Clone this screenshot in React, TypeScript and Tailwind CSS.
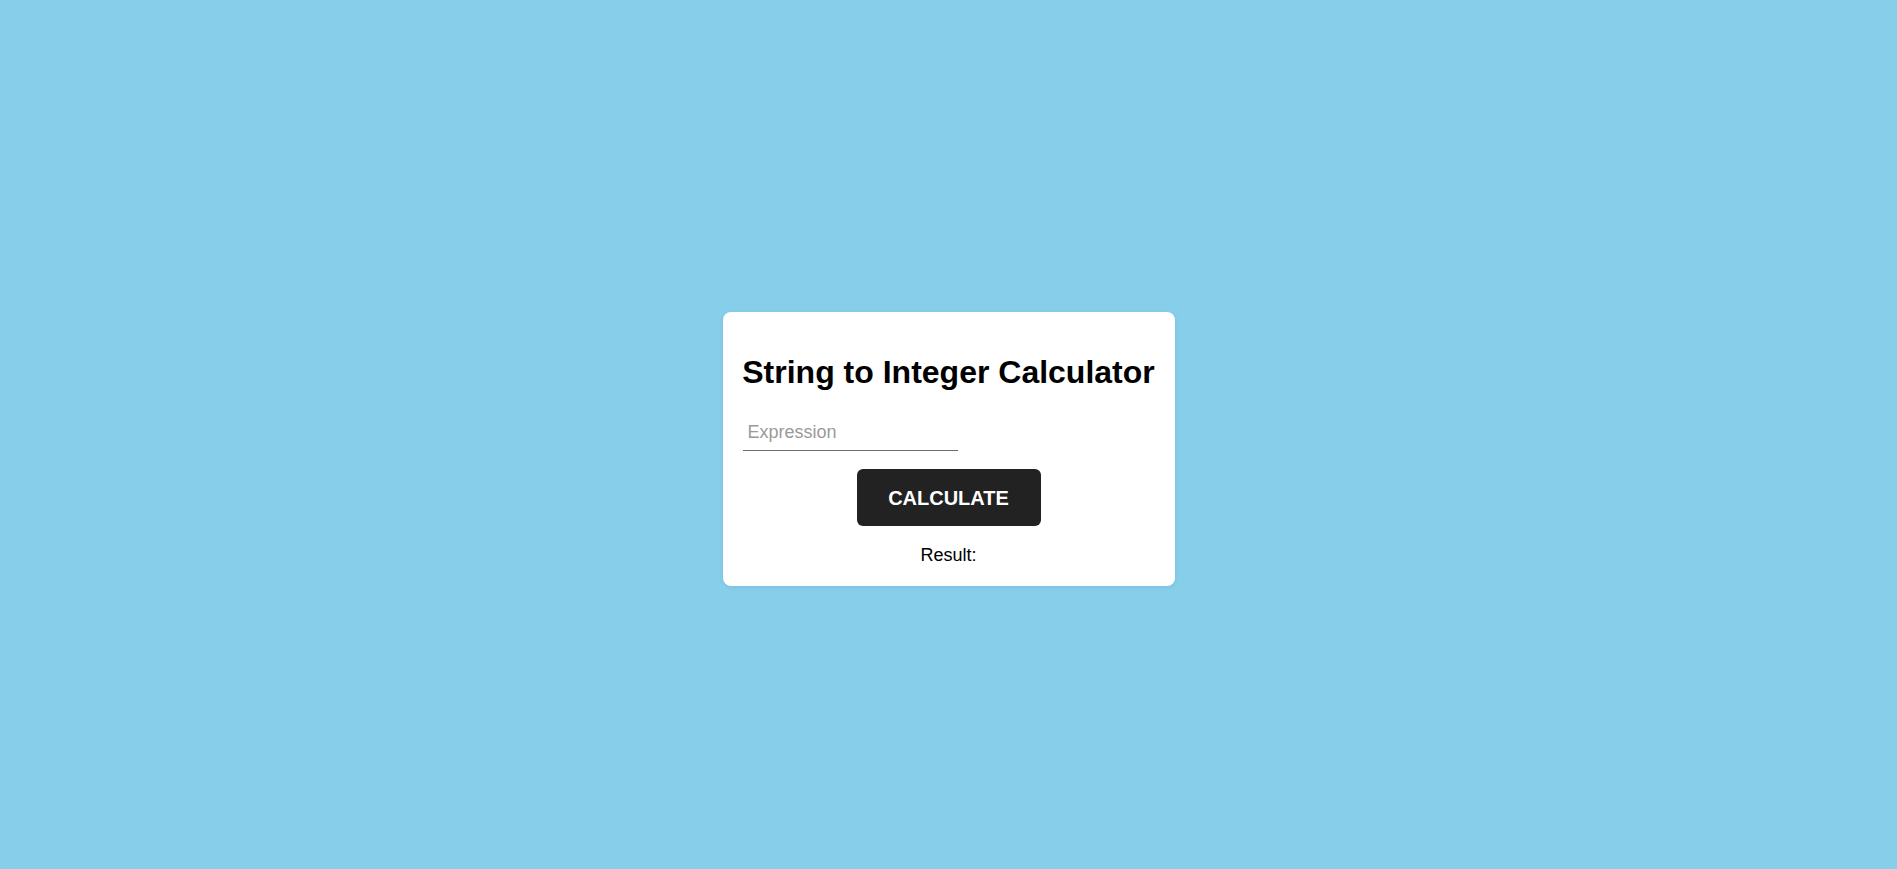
import { useState } from 'react';

export default function App() {
  const [expr, setExpr] = useState('');
  const [result, setResult] = useState('');

  const calculate = () => {
    const n = parseInt(expr, 10);
    setResult(Number.isNaN(n) ? '' : String(n));
  };

  return (
    <div className="min-h-screen w-full bg-[#87ceeb] flex items-center justify-center pt-[29px] font-['Liberation_Sans',Arial,sans-serif]">
      <div className="w-[452px] bg-white rounded-lg p-5 flex flex-col items-center shadow-[0_1px_4px_rgba(0,0,0,0.08)]">
        <h1 className="text-[32px] leading-[37px] font-bold text-black mt-[22px] mb-[21px] text-center whitespace-nowrap">
          String to Integer Calculator
        </h1>

        <input
          type="text"
          value={expr}
          onChange={(e) => setExpr(e.target.value)}
          placeholder="Expression"
          className="self-start w-[215px] h-[39px] px-[5px] pt-[3px] text-[18px] text-black placeholder:text-[#9a9a9a] border-b border-[#6b6b6b] outline-none bg-transparent"
        />

        <button
          onClick={calculate}
          className="mt-[18px] w-[184px] h-[57px] rounded-md bg-[#222222] text-white text-[20px] font-bold"
        >
          CALCULATE
        </button>

        <div className="mt-[19px] text-[18px] leading-[21px] text-black">
          Result: {result}
        </div>
      </div>
    </div>
  );
}
